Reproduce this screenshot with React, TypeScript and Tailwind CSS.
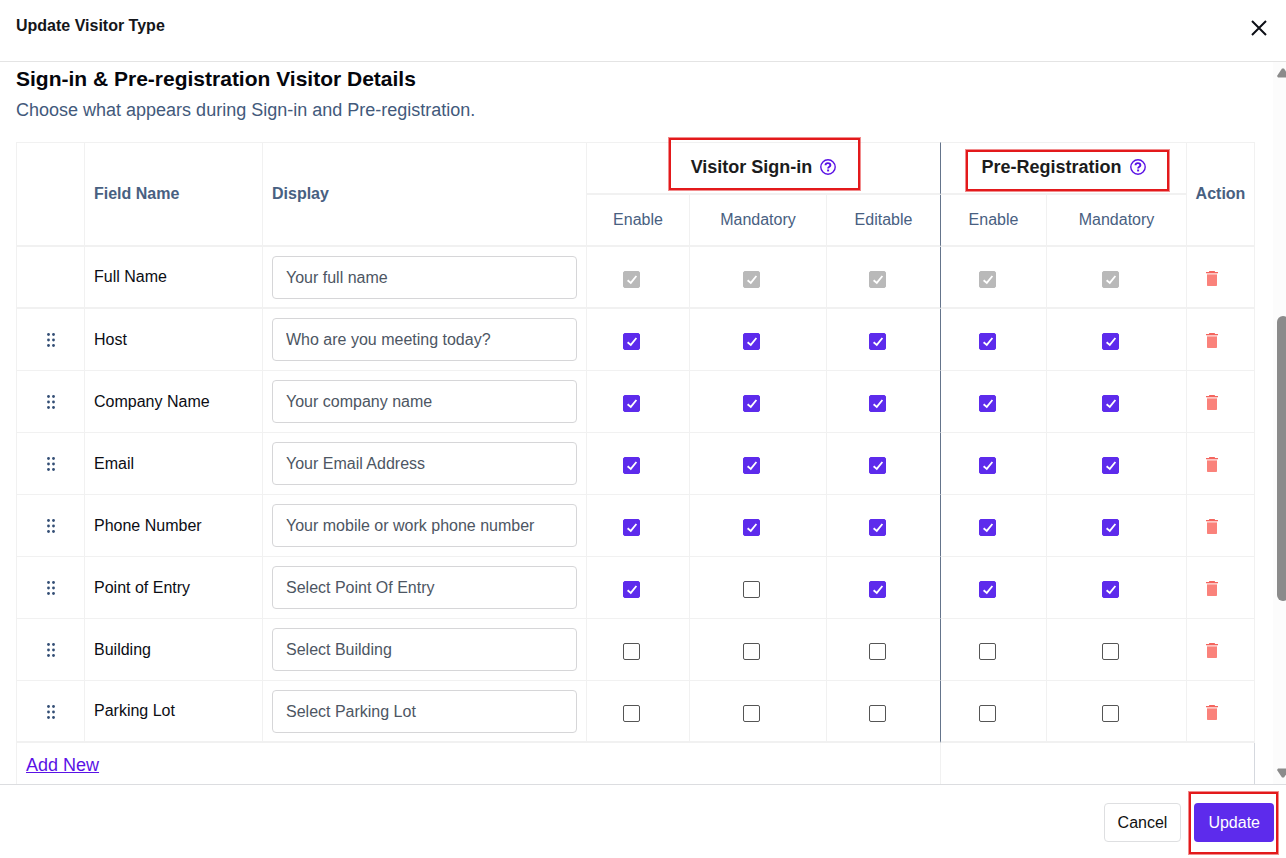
import { useState } from 'react';
import clsx from 'clsx';

type ColumnKey =
  | 'signInEnable'
  | 'signInMandatory'
  | 'signInEditable'
  | 'preRegEnable'
  | 'preRegMandatory';

interface Column {
  key: ColumnKey;
  group: string;
  label: string;
}

interface VisitorField {
  id: string;
  name: string;
  display: string;
  locked?: boolean;
  checks: Record<ColumnKey, boolean>;
}

const COLUMNS: Column[] = [
  { key: 'signInEnable', group: 'Visitor Sign-in', label: 'Enable' },
  { key: 'signInMandatory', group: 'Visitor Sign-in', label: 'Mandatory' },
  { key: 'signInEditable', group: 'Visitor Sign-in', label: 'Editable' },
  { key: 'preRegEnable', group: 'Pre-Registration', label: 'Enable' },
  { key: 'preRegMandatory', group: 'Pre-Registration', label: 'Mandatory' },
];

const ALL_ON: Record<ColumnKey, boolean> = {
  signInEnable: true,
  signInMandatory: true,
  signInEditable: true,
  preRegEnable: true,
  preRegMandatory: true,
};

const ALL_OFF: Record<ColumnKey, boolean> = {
  signInEnable: false,
  signInMandatory: false,
  signInEditable: false,
  preRegEnable: false,
  preRegMandatory: false,
};

const INITIAL_FIELDS: VisitorField[] = [
  { id: 'full-name', name: 'Full Name', display: 'Your full name', locked: true, checks: ALL_ON },
  { id: 'host', name: 'Host', display: 'Who are you meeting today?', checks: ALL_ON },
  { id: 'company', name: 'Company Name', display: 'Your company name', checks: ALL_ON },
  { id: 'email', name: 'Email', display: 'Your Email Address', checks: ALL_ON },
  { id: 'phone', name: 'Phone Number', display: 'Your mobile or work phone number', checks: ALL_ON },
  {
    id: 'entry',
    name: 'Point of Entry',
    display: 'Select Point Of Entry',
    checks: { ...ALL_ON, signInMandatory: false },
  },
  { id: 'building', name: 'Building', display: 'Select Building', checks: ALL_OFF },
  { id: 'parking', name: 'Parking Lot', display: 'Select Parking Lot', checks: ALL_OFF },
];

function HelpIcon() {
  return (
    <svg viewBox="0 0 16 16" className="h-4 w-4" fill="none" stroke="currentColor">
      <circle cx="8" cy="8" r="7.2" strokeWidth="1.4" />
      <path d="M5.500 6.300c0-1.400 1.100-2.200 2.400-2.200s2.500.8 2.500 2.100c0 1.500-2.300 1.600-2.300 3.300" strokeWidth="1.9" />
      <path d="M8.100 10.500v1.900" strokeWidth="2" />
    </svg>
  );
}

function TrashIcon() {
  return (
    <svg viewBox="0 0 12 15" className="h-[15px] w-3">
      <path d="M3 .6C3 .3 3.300 0 3.600 0h4.800c.3 0 .6.3.6.6V1h3v1.300H0V1h3z" fill="#f4655e" />
      <path d="M1 2.300h10V4H1z" fill="#fcc0bc" />
      <path d="M1 3.700h10v10.300c0 .6-.4 1-1 1H2c-.6 0-1-.4-1-1z" fill="#fa827b" />
    </svg>
  );
}

function DragIcon() {
  return (
    <svg viewBox="0 0 8 14" className="h-3.5 w-2" fill="#334e75">
      {[1.5, 7, 12.5].map((cy) => (
        <g key={cy}>
          <circle cx="1.500" cy={cy} r="1.4" />
          <circle cx="6.500" cy={cy} r="1.4" />
        </g>
      ))}
    </svg>
  );
}

interface CheckboxProps {
  label: string;
  checked: boolean;
  disabled?: boolean;
  onChange: () => void;
}

function Checkbox({ label, checked, disabled, onChange }: CheckboxProps) {
  return (
    <span className="mr-3 inline-grid align-top">
      <input
        type="checkbox"
        aria-label={label}
        checked={checked}
        disabled={disabled}
        onChange={onChange}
        className="col-start-1 row-start-1 h-[17px] w-[17px] appearance-none rounded-xs border border-[#555] bg-white checked:border-[#5d2bec] checked:bg-[#5d2bec] disabled:border-[#b9b9b9] disabled:bg-[#b9b9b9]"
      />
      {checked && (
        <svg
          viewBox="0 0 17 17"
          className="pointer-events-none col-start-1 row-start-1 h-[17px] w-[17px]"
          fill="none"
          stroke="#fff"
          strokeWidth="1.8"
        >
          <path d="M4.600 9.200l3.200 2.700 5.600-6.900" />
        </svg>
      )}
    </span>
  );
}

function GroupTitle({ title }: { title: string }) {
  return (
    <span className="flex items-center justify-center gap-2 pb-0.5 text-lg leading-6 font-bold text-[#1c1c1c]">
      {title}
      <button type="button" aria-label={`About ${title}`} className="text-[#5a12e6]">
        <HelpIcon />
      </button>
    </span>
  );
}

// Callout frame drawn over the content it highlights
function Callout({ className }: { className: string }) {
  return (
    <span
      className={clsx(
        'pointer-events-none absolute border-2 border-[#e3191b] outline outline-[#e3191b]/50',
        className
      )}
    />
  );
}

function Scrollbar() {
  return (
    <div className="flex w-[13px] shrink-0 flex-col overflow-hidden bg-[#fcfcfc] pt-1.5 pb-1.5 pl-1">
      <svg viewBox="0 0 12 10" className="h-2.5 w-3 shrink-0">
        <path d="M5 .5h2l5 7.500-1 1.500H1L0 8z" fill="#8b8b8b" />
      </svg>
      <div className="grow-[238]" />
      <div className="w-3 grow-[286] rounded-md bg-[#8b8b8b]" />
      <div className="grow-[167]" />
      <svg viewBox="0 0 12 10" className="h-2.5 w-3 shrink-0">
        <path d="M5 9.500h2l5-7.500-1-1.500H1L0 2z" fill="#8b8b8b" />
      </svg>
    </div>
  );
}

export default function App() {
  const [fields, setFields] = useState(INITIAL_FIELDS);

  const toggle = (id: string, key: ColumnKey) => {
    setFields((prev) =>
      prev.map((f) => (f.id === id ? { ...f, checks: { ...f.checks, [key]: !f.checks[key] } } : f))
    );
  };

  const setDisplay = (id: string, display: string) => {
    setFields((prev) => prev.map((f) => (f.id === id ? { ...f, display } : f)));
  };

  const remove = (id: string) => setFields((prev) => prev.filter((f) => f.id !== id));

  const addField = () => {
    setFields((prev) => [
      ...prev,
      { id: `field-${Date.now()}`, name: 'New Field', display: '', checks: ALL_OFF },
    ]);
  };

  return (
    <div className="flex h-screen flex-col bg-white font-['Liberation_Sans',Arial,sans-serif] text-base text-[#0b0d14]">
      <header className="flex h-[62px] shrink-0 items-start justify-between border-b border-[#e4e4e4] pt-3.5 pr-[19px] pl-4">
        <h1 className="leading-6 font-bold text-[#14161a]">Update Visitor Type</h1>
        <button type="button" aria-label="Close" className="mt-1.5">
          <svg viewBox="0 0 16 16" className="h-4 w-4" fill="none" stroke="#0d0f16" strokeWidth="2">
            <path d="M1 1l14 14M15 1L1 15" />
          </svg>
        </button>
      </header>

      <main className="flex min-h-0 flex-1">
        <div className="min-w-0 flex-1 overflow-hidden pt-1 pr-[18px] pl-4">
          <h2 className="text-[21px] leading-[26px] font-bold text-[#05060c]">
            Sign-in &amp; Pre-registration Visitor Details
          </h2>
          <p className="mt-1.5 mb-5 text-lg leading-6 text-[#42597b]">
            Choose what appears during Sign-in and Pre-registration.
          </p>

          <table className="w-full table-fixed border-separate border-spacing-0">
            <colgroup>
              <col className="w-[69px]" />
              <col className="w-[178px]" />
              <col />
              <col className="w-[103px]" />
              <col className="w-[137px]" />
              <col className="w-[114px]" />
              <col className="w-[106px]" />
              <col className="w-[140px]" />
              <col className="w-[68px]" />
            </colgroup>
            <thead className="text-[#486081]">
              <tr>
                <th rowSpan={2} aria-label="Reorder" className="border-t border-r border-b-2 border-l border-[#f1f1f1]" />
                <th rowSpan={2} className="border-t border-r border-b-2 border-[#f1f1f1] px-[9px] text-left">
                  Field Name
                </th>
                <th rowSpan={2} className="border-t border-r border-b-2 border-[#f1f1f1] px-[9px] text-left">
                  Display
                </th>
                <th
                  colSpan={3}
                  className="relative h-[53px] border-t border-r border-b-2 border-[#f1f1f1] border-r-[#64748b]"
                >
                  <GroupTitle title={COLUMNS[0].group} />
                  <Callout className="-top-[5px] right-20 bottom-[3px] left-[82px]" />
                </th>
                <th colSpan={2} className="relative h-[53px] border-t border-r border-b-2 border-[#f1f1f1]">
                  <GroupTitle title={COLUMNS[3].group} />
                  <Callout className="top-[7px] right-[17px] bottom-0.5 left-[25px]" />
                </th>
                <th rowSpan={2} className="border-t border-r border-b-2 border-[#f1f1f1]">
                  Action
                </th>
              </tr>
              <tr>
                {COLUMNS.map((col) => (
                  <th
                    key={col.key}
                    className={clsx(
                      'h-[52px] border-r border-b-2 border-[#f1f1f1] font-normal',
                      col.key === 'signInEditable' && 'border-r-[#64748b]'
                    )}
                  >
                    {col.label}
                  </th>
                ))}
              </tr>
            </thead>
            <tbody>
              {fields.map((field, index) => {
                const cell = clsx(
                  'h-[62px] border-r border-[#f1f1f1]',
                  field.locked || index === fields.length - 1 ? 'border-b-2' : 'border-b'
                );
                return (
                  <tr key={field.id}>
                    <td className={clsx(cell, 'border-l text-center')}>
                      {!field.locked && (
                        <button
                          type="button"
                          aria-label={`Move ${field.name}`}
                          className="inline-block cursor-grab align-middle"
                        >
                          <DragIcon />
                        </button>
                      )}
                    </td>
                    <td className={clsx(cell, 'px-[9px]')}>
                      <label htmlFor={field.id}>{field.name}</label>
                    </td>
                    <td className={clsx(cell, 'px-[9px] pt-[9px] pb-2 align-top')}>
                      <input
                        id={field.id}
                        type="text"
                        value={field.display}
                        onChange={(e) => setDisplay(field.id, e.target.value)}
                        className="block h-[43px] w-full rounded-sm border border-[#d6d6d8] px-[13px] text-[#4d5663] outline-none focus:border-[#5d2bec]"
                      />
                    </td>
                    {COLUMNS.map((col) => (
                      <td
                        key={col.key}
                        className={clsx(
                          cell,
                          'pt-6 text-center align-top',
                          col.key === 'signInEditable' && 'border-r-[#64748b]'
                        )}
                      >
                        <Checkbox
                          label={`${field.name}: ${col.group} ${col.label}`}
                          checked={field.checks[col.key]}
                          disabled={field.locked}
                          onChange={() => toggle(field.id, col.key)}
                        />
                      </td>
                    ))}
                    <td className={clsx(cell, 'pt-6 pl-[19px] align-top')}>
                      <button
                        type="button"
                        aria-label={`Delete ${field.name}`}
                        disabled={field.locked}
                        onClick={() => remove(field.id)}
                        className="block"
                      >
                        <TrashIcon />
                      </button>
                    </td>
                  </tr>
                );
              })}
            </tbody>
            <tfoot>
              <tr>
                <td colSpan={6} className="h-[52px] border-r border-l border-[#f1f1f1] px-[9px] pt-2.5 align-top">
                  <button
                    type="button"
                    onClick={addField}
                    className="block text-lg leading-6 text-[#5a12e6] underline"
                  >
                    Add New
                  </button>
                </td>
                <td colSpan={3} className="border-r border-[#d5d8de]" />
              </tr>
            </tfoot>
          </table>
        </div>
        <Scrollbar />
      </main>

      <footer className="flex h-[74px] shrink-0 items-start justify-end gap-[13px] border-t border-[#dcdde0] pt-[18px] pr-3">
        <button type="button" className="h-[39px] rounded-sm border border-[#dedfe1] px-[13px] text-[#111]">
          Cancel
        </button>
        <div className="relative">
          <button type="button" className="h-[39px] rounded-sm bg-[#5d2bec] px-3.5 text-white">
            Update
          </button>
          <Callout className="-top-[11px] -right-1 -bottom-3 -left-[5px]" />
        </div>
      </footer>
    </div>
  );
}
